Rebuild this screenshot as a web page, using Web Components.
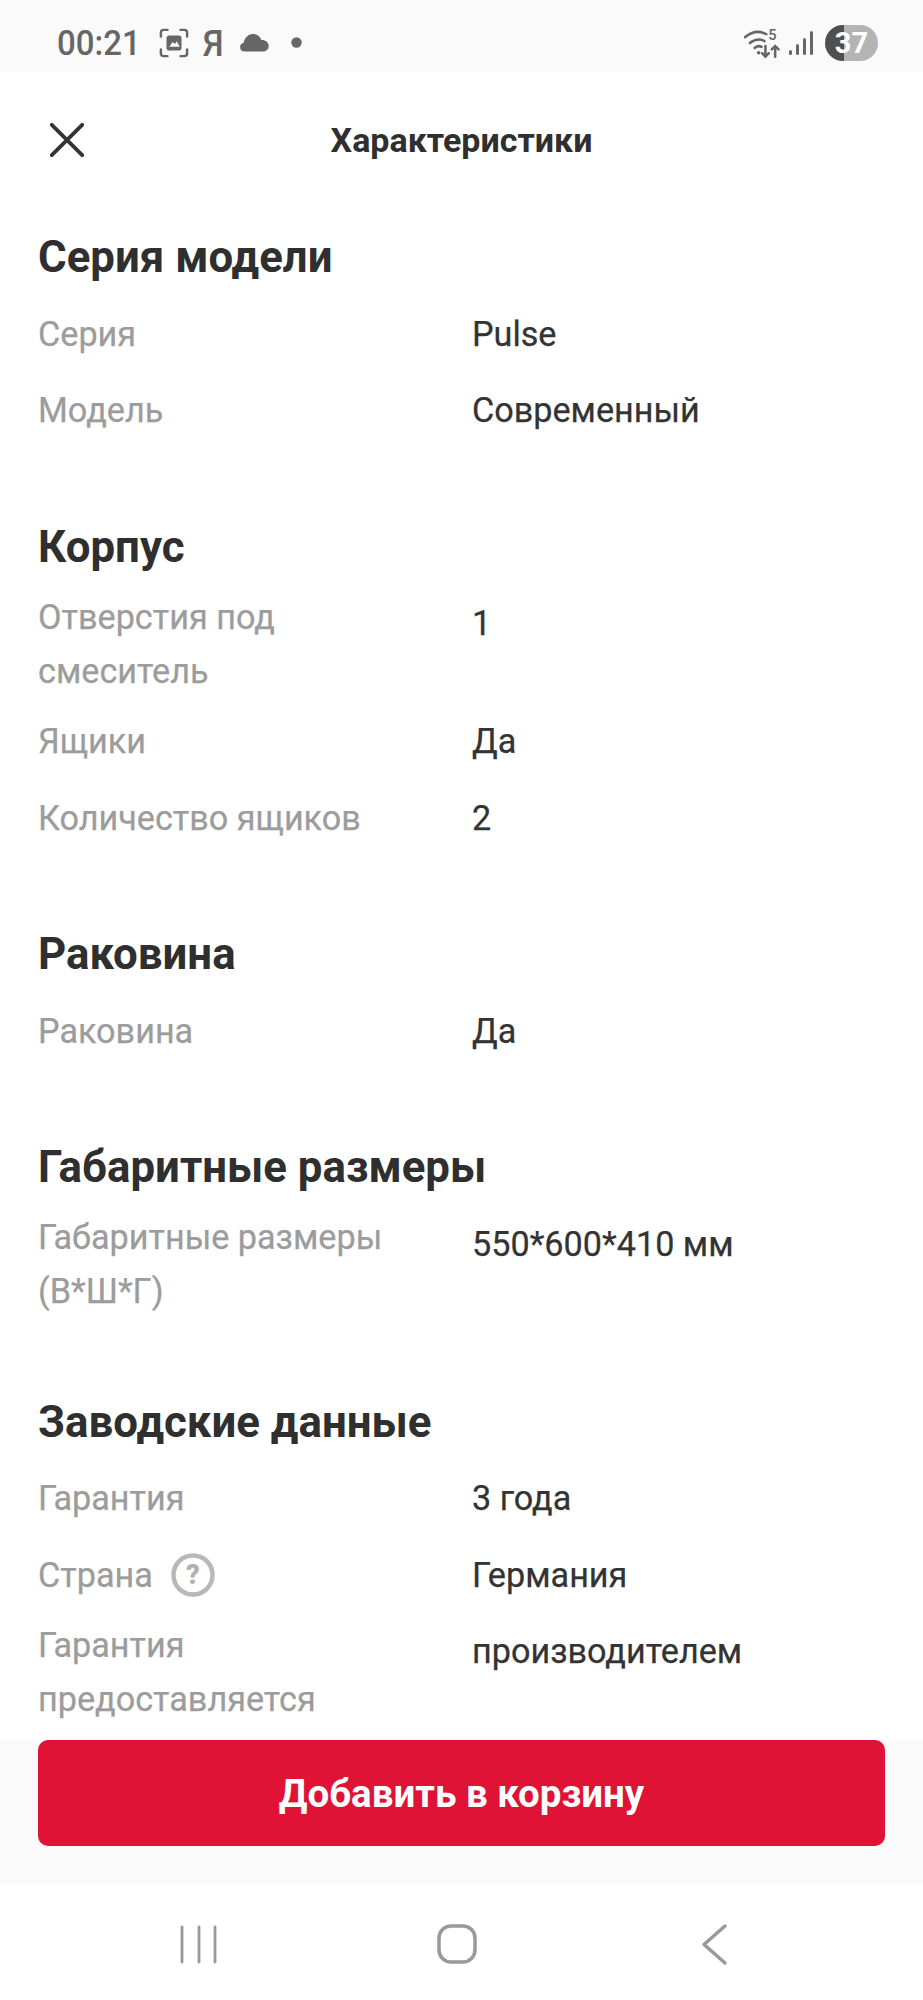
<!DOCTYPE html>
<html lang="ru"><head><meta charset="utf-8"><title>Характеристики</title>
<style>
html,body{margin:0;padding:0;background:#fff}
body{font-family:Roboto,"Liberation Sans",sans-serif;width:923px;height:2000px;overflow:hidden}
</style></head><body>
<spec-app>
  <status-bar slot="status"></status-bar>
  <spec-header slot="header" title="Характеристики"></spec-header>
  <spec-section title="Серия модели">
    <spec-row label="Серия" value="Pulse"></spec-row>
    <spec-row label="Модель" value="Современный"></spec-row>
  </spec-section>
  <spec-section title="Корпус">
    <spec-row two label="Отверстия под смеситель" value="1"></spec-row>
    <spec-row label="Ящики" value="Да"></spec-row>
    <spec-row label="Количество ящиков" value="2"></spec-row>
  </spec-section>
  <spec-section title="Раковина">
    <spec-row label="Раковина" value="Да"></spec-row>
  </spec-section>
  <spec-section title="Габаритные размеры">
    <spec-row two label="Габаритные размеры (В*Ш*Г)" value="550*600*410 мм"></spec-row>
  </spec-section>
  <spec-section title="Заводские данные">
    <spec-row label="Гарантия" value="3 года"></spec-row>
    <spec-row label="Страна" value="Германия" help></spec-row>
    <spec-row two label="Гарантия предоставляется" value="производителем"></spec-row>
  </spec-section>
  <cart-footer slot="footer">Добавить в корзину</cart-footer>
  <nav-bar slot="nav"></nav-bar>
</spec-app>
<script>
function def(name, html, init){
  customElements.define(name, class extends HTMLElement{
    constructor(){super();this.attachShadow({mode:'open'}).innerHTML=html;}
    connectedCallback(){ if(init) init(this,this.shadowRoot); }
  });
}
def('spec-app',`<style>
:host{display:flex;flex-direction:column;width:923px;height:2000px;background:#fff;overflow:hidden}
main{flex:1;min-height:0;overflow:hidden;padding:21px 38px 0}
</style><slot name="status"></slot><slot name="header"></slot><main><slot></slot></main><slot name="footer"></slot><slot name="nav"></slot>`);
def('status-bar',`<style>
:host{display:flex;align-items:center;height:72px;background:#fafafa;color:#666;box-sizing:border-box;padding:13px 45px 0 57px;flex:none}
.time{font:500 33px/1 Roboto,sans-serif;color:#666;transform:scaleY(1.08)}
.ya{font:500 34px/1 Roboto,sans-serif;margin-left:14px;transform:scaleY(1.08)}
svg{display:block;flex:none}
.sp{flex:1}
.batt{width:53px;height:36px;border-radius:18px;overflow:hidden;background:linear-gradient(90deg,#4f4f4f 0 19px,#b4b4b4 19px);color:#fff;font:700 29px/36px Roboto,sans-serif;text-align:center}
</style>
<span class="time">00:21</span>
<svg style="margin-left:18px" width="30" height="30" viewBox="0 0 32 32" fill="none" stroke="#666" stroke-width="2.600" stroke-linecap="round"><path d="M2 9V5q0-3 3-3h4M23 2h4q3 0 3 3v4M30 23v4q0 3-3 3h-4M9 30H5q-3 0-3-3v-4"/><rect x="8" y="8" width="16" height="16" rx="3" fill="#666" stroke="none"/><path d="M11 20l3.500-5 2.500 2 2-3 3 6z" fill="#fafafa" stroke="none"/></svg>
<span class="ya">Я</span>
<svg style="margin-left:14px" width="32" height="19" viewBox="0 0 32 20"><path d="M6 19.500a4.500 4.500 0 0 1-1-8.900C6 4.500 10.500 1 15 1c4.500 0 7.500 2.700 8.800 6.300 4.500-.2 7.700 2.700 7.700 6.400 0 3.300-2.500 5.800-6 5.800z" fill="#666"/></svg>
<svg style="margin-left:21px" width="11" height="11" viewBox="0 0 11 11"><circle cx="5.500" cy="5.500" r="5.200" fill="#666"/></svg>
<span class="sp"></span>
<svg width="37" height="34" viewBox="0 0 38 34" fill="none" stroke="#666" stroke-width="2.600" stroke-linecap="round"><path d="M1 11q11-9 22-3M6 17q8-6 15-2M11 22q4-3 7-1"/><circle cx="15" cy="27" r="1.800" fill="#666" stroke="none"/><path d="M22 20v11M18.500 27.500l3.500 3.500 3.500-3.500M32 31V20M28.500 23.500l3.500-3.500 3.500 3.500"/><text x="25" y="14" font-family="Roboto,sans-serif" font-size="15" font-weight="500" fill="#666" stroke="none">5</text></svg>
<svg style="margin-left:8px" width="24" height="26" viewBox="0 0 24 26" fill="#666"><rect x="0" y="20" width="3" height="5" rx="1.500"/><rect x="7" y="14" width="3" height="11" rx="1.500"/><rect x="14" y="8" width="3" height="17" rx="1.500"/><rect x="21" y="1" width="3" height="24" rx="1.500"/></svg>
<span class="batt" style="margin-left:12px">37</span>`);
def('spec-header',`<style>
:host{display:flex;align-items:center;justify-content:center;position:relative;height:136px;flex:none}
h1{margin:0;font:700 34px/1 Roboto,sans-serif;color:#2f2f2f}
svg{position:absolute;left:50px;top:51px}
</style><svg width="34" height="34" viewBox="0 0 34 34" fill="none" stroke="#333" stroke-width="3.800" stroke-linecap="round"><path d="M1.800 1.800l30.400 30.400M32.200 1.800L1.800 32.200"/></svg><h1></h1>`,(h,s)=>{s.querySelector('h1').textContent=h.getAttribute('title');h.removeAttribute('title');});
def('spec-section',`<style>
:host{display:block;margin-bottom:78px}
h2{margin:0 0 19px;font:700 43.800px/56px Roboto,sans-serif;color:#2f2f2f}
</style><h2></h2><slot></slot>`,(h,s)=>{s.querySelector('h2').textContent=h.getAttribute('title');h.removeAttribute('title');});
def('spec-row',`<style>
:host{display:grid;grid-template-columns:434px 1fr;margin-bottom:16.500px;font:400 34.200px/54.400px Roboto,sans-serif;align-items:start;-webkit-text-stroke:.25px currentColor}
:host([two]){margin-top:-4px;margin-bottom:13px}
:host([two]:last-child){margin-bottom:-3px}
:host([two]) .v{padding-top:4px}
.l{color:#9c9c9c;min-height:60px;display:flex;align-items:center;padding-right:40px;box-sizing:border-box}
.v{color:#333;min-height:60px;display:flex;align-items:center}
svg{margin-left:18px;flex:none}
</style><div class="l"><span class="t"></span></div><div class="v"></div>`,(h,s)=>{
  s.querySelector('.t').textContent=h.getAttribute('label');s.querySelector('.v').textContent=h.getAttribute('value');
  if(h.hasAttribute('help')&&!s.querySelector('svg')){s.querySelector('.l').insertAdjacentHTML('beforeend','<svg width="44" height="44" viewBox="0 0 44 44" fill="none"><circle cx="22" cy="22" r="19.500" stroke="#b8b8bb" stroke-width="4.500"/><text x="22" y="31" text-anchor="middle" font-family="Roboto,sans-serif" font-size="27" font-weight="900" fill="#b0b0b0">?</text></svg>');}
});
def('cart-footer',`<style>
:host{display:block;flex:none;height:144px;background:#fafafa;padding:0 38px;box-sizing:border-box}
button{display:block;width:100%;height:106px;border:0;border-radius:10px;background:#e01235;color:#fff;font:700 38.500px/1 Roboto,sans-serif;padding:3px 0 0}
</style><button><slot></slot></button>`);
def('nav-bar',`<style>
:host{display:block;height:116px;background:#fff;flex:none}
svg{display:block}
</style><svg width="923" height="116" viewBox="0 0 923 116" fill="none" stroke="#999" stroke-linecap="round" stroke-linejoin="round"><path stroke-width="2.800" d="M182 43v35M199 43v35M215 43v35"/><rect x="439" y="42" width="36" height="36" rx="12" stroke-width="3.500"/><path stroke-width="3.500" d="M725 42L704 60.500 725 79"/></svg>`);
</script>
</body></html>
